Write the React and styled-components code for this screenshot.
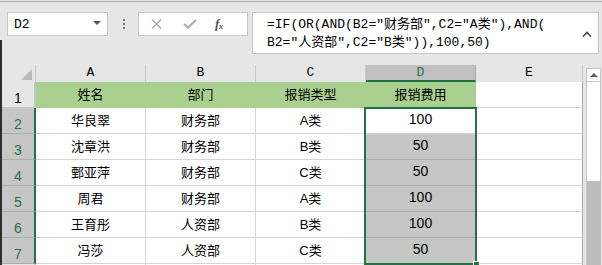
import React from 'react';
import styled, { createGlobalStyle } from 'styled-components';

const GlobalStyle = createGlobalStyle`
  html, body {
    margin: 0;
    padding: 0;
    background: #e6e6e6;
  }
  body {
    font-family: "Liberation Sans", "Noto Sans CJK SC", sans-serif;
  }
`

const Window = styled.div`
  width: 602px;
  height: 265px;
  overflow: hidden;
  background-color: #e6e6e6;
  background-image: linear-gradient(#2e2e2e, #2e2e2e);
  background-size: 2px 225px;
  background-position: 0 40px;
  background-repeat: no-repeat;
`

const TopLine = styled.div`
  height: 1px;
  margin-top: 1px;
  background: #ababab;
`

const FormulaBar = styled.div`
  display: flex;
  align-items: flex-start;
  padding: 10px 0 0 7px;
  height: 51px;
  box-sizing: border-box;
`

const NameBox = styled.div`
  width: 101px;
  height: 24px;
  box-sizing: border-box;
  border: 1px solid #c6c6c6;
  background: #fff;
  display: flex;
  align-items: center;
  justify-content: space-between;
  padding: 0 6px 0 6px;
  font-family: "Liberation Mono", "Noto Sans CJK SC", monospace;
  font-size: 13px;
  color: #000;
`

const DropArrow = styled.span`
  width: 0;
  height: 0;
  border-left: 4px solid transparent;
  border-right: 4px solid transparent;
  border-top: 4px solid #555;
  margin-top: -2px;
`

const Dots = styled.div`
  display: flex;
  flex-direction: column;
  gap: 2px;
  margin: 7px 13px 0 15px;
`

const Dot = styled.span`
  width: 2px;
  height: 2px;
  background: #707070;
`

const ButtonsBox = styled.div`
  width: 110px;
  height: 24px;
  box-sizing: border-box;
  border: 1px solid #c6c6c6;
  background: #fff;
  display: flex;
  align-items: center;
  padding-left: 12px;
`

const BarButton = styled.span`
  width: 36px;
  display: flex;
  align-items: center;
  justify-content: flex-start;
`

const Fx = styled.span`
  font-family: "Liberation Serif", serif;
  font-style: italic;
  font-weight: bold;
  font-size: 13px;
  color: #555;
  letter-spacing: -0.5px;
  sub {
    font-size: 9px;
    vertical-align: -1px;
  }
`

const FormulaBox = styled.div`
  margin-left: 4px;
  width: 347px;
  height: 42px;
  box-sizing: border-box;
  border: 1px solid #c6c6c6;
  background: #fff;
  display: flex;
  justify-content: space-between;
  padding: 3px 6px 0 14px;
`

const FormulaText = styled.div`
  font-family: "Liberation Mono", "Noto Sans CJK SC", monospace;
  font-size: 13px;
  line-height: 18px;
  color: #000;
  white-space: pre;
`

const Caret = styled.span`
  margin-top: 7px;
`

const Sheet = styled.div`
  display: flex;
  align-items: flex-start;
  margin-top: 12px;
  padding-left: 2px;
`

const Grid = styled.div`
  position: relative;
  display: grid;
  grid-template-columns: 34px 110px 110px 110px 110px 107px;
  grid-template-rows: 17px repeat(8, 26px);
`

const Corner = styled.div`
  border-right: 1px solid #c6c6c6;
  display: flex;
  align-items: flex-end;
  justify-content: flex-end;
  padding: 0 3px 2px 0;
`

const CornerTriangle = styled.span`
  width: 0;
  height: 0;
  border-left: 11px solid transparent;
  border-bottom: 11px solid #b9b9b9;
`

const ColHead = styled.div`
  box-sizing: border-box;
  background: ${p => (p.$selected ? '#c0c0c0' : '#e6e6e6')};
  border-right: 1px solid ${p => (p.$selected ? '#a8a8a8' : '#c9c9c9')};
  border-bottom: ${p => (p.$selected ? '2px solid #217346' : 'none')};
  color: ${p => (p.$selected ? '#217346' : '#000')};
  font-family: "Liberation Mono", monospace;
  font-size: 13px;
  display: flex;
  align-items: flex-end;
  justify-content: center;
  padding-bottom: ${p => (p.$selected ? '0' : '2px')};
  line-height: 14px;
`

const RowHead = styled.div`
  box-sizing: border-box;
  background: ${p => (p.$selected ? '#c6c6c6' : '#e6e6e6')};
  border-right: 2px solid ${p => (p.$selected ? '#217346' : '#c6c6c6')};
  border-bottom: 1px solid ${p => (p.$selected ? '#ababab' : '#c6c6c6')};
  color: ${p => (p.$selected ? '#217346' : '#000')};
  font-size: 14px;
  display: flex;
  align-items: flex-end;
  justify-content: center;
  padding-bottom: 1px;
  line-height: 16px;
`

const Cell = styled.div`
  box-sizing: border-box;
  background: ${p => p.$bg || '#fff'};
  border-right: 1px solid ${p => p.$edge || p.$line || '#d4d4d4'};
  border-bottom: 1px solid ${p => p.$line || '#d4d4d4'};
  display: flex;
  align-items: center;
  justify-content: center;
  padding-bottom: 3px;
  font-family: "Liberation Sans", "Noto Sans CJK SC", sans-serif;
  font-size: ${p => (p.$num ? '14px' : '13px')};
  color: #000;
`

/* absolutely placed grid child: it overlays D2:D7 without taking grid cells */
const Selection = styled.div`
  position: absolute;
  grid-column: 5 / 6;
  grid-row: 3 / 9;
  top: -1px;
  left: -2px;
  right: -1px;
  bottom: -1px;
  border: 2px solid #217346;
  pointer-events: none;
`

const FillHandle = styled.span`
  position: absolute;
  right: -4px;
  bottom: -4px;
  width: 5px;
  height: 5px;
  background: #217346;
  box-shadow: 0 0 0 1px #fff;
`

const Scrollbar = styled.div`
  margin-left: 3px;
  margin-top: 3px;
  width: 15px;
  height: 200px;
  display: flex;
  flex-direction: column;
`

const ScrollUp = styled.div`
  height: 14px;
  box-sizing: border-box;
  border: 1px solid #c4c4c4;
  background: #fff;
  display: flex;
  align-items: center;
  justify-content: center;
  &::after {
    content: '';
    border-left: 4px solid transparent;
    border-right: 4px solid transparent;
    border-bottom: 4px solid #606060;
  }
`

const ScrollTrack = styled.div`
  height: 100px;
  box-sizing: border-box;
  border: 1px solid #c4c4c4;
  border-top: none;
  background: #fff;
`

const ScrollThumb = styled.div`
  flex: 1;
  background: #bcbcbc;
  border-left: 1px solid #c4c4c4;
`

const cols = ['A', 'B', 'C', 'D', 'E'];

const rows = [
  ['华良翠', '财务部', 'A类', 100],
  ['沈章洪', '财务部', 'B类', 50],
  ['鄄亚萍', '财务部', 'C类', 50],
  ['周君', '财务部', 'A类', 100],
  ['王育彤', '人资部', 'B类', 100],
  ['冯莎', '人资部', 'C类', 50],
];

const header = ['姓名', '部门', '报销类型', '报销费用'];

const App = () => (
  <Window>
    <GlobalStyle />
    <TopLine />
    <FormulaBar>
      <NameBox>
        D2
        <DropArrow />
      </NameBox>
      <Dots>
        <Dot /><Dot /><Dot />
      </Dots>
      <ButtonsBox>
        <BarButton>
          <svg width="11" height="10" viewBox="0 0 11 10">
            <path d="M1 0.5 L10 9.5 M10 0.5 L1 9.5" stroke="#a2a2a2" strokeWidth="1.2" fill="none" />
          </svg>
        </BarButton>
        <BarButton>
          <svg width="14" height="10" viewBox="0 0 14 10">
            <path d="M1 5 L5 8.5 L13 1" stroke="#adadad" strokeWidth="2.2" fill="none" />
          </svg>
        </BarButton>
        <BarButton>
          <Fx>f<sub>x</sub></Fx>
        </BarButton>
      </ButtonsBox>
      <FormulaBox>
        <FormulaText>
          {'=IF(OR(AND(B2="财务部",C2="A类"),AND(\nB2="人资部",C2="B类")),100,50)'}
        </FormulaText>
        <Caret>
          <svg width="10" height="6" viewBox="0 0 10 6">
            <path d="M1 5.5 L5 1.5 L9 5.5" stroke="#444" strokeWidth="1.6" fill="none" />
          </svg>
        </Caret>
      </FormulaBox>
    </FormulaBar>
    <Sheet>
      <Grid>
        <Corner><CornerTriangle /></Corner>
        {cols.map(c => (
          <ColHead key={c} $selected={c === 'D'}>{c}</ColHead>
        ))}

        <RowHead>1</RowHead>
        {header.map(h => (
          <Cell key={h} $bg="#a9d08e" $line="#a9d08e">{h}</Cell>
        ))}
        <Cell $edge="#a6a6a6" />

        {rows.map((r, i) => {
          const active = i === 0;
          return (
            <React.Fragment key={i}>
              <RowHead $selected>{i + 2}</RowHead>
              <Cell>{r[0]}</Cell>
              <Cell>{r[1]}</Cell>
              <Cell>{r[2]}</Cell>
              <Cell $num $bg={active ? '#fff' : '#c6c6c6'} $line={active ? '#d4d4d4' : '#ababab'}>
                {r[3]}
              </Cell>
              <Cell $edge="#a6a6a6" />
            </React.Fragment>
          );
        })}

        <RowHead />
        <Cell /><Cell /><Cell /><Cell /><Cell $edge="#a6a6a6" />

        <Selection>
          <FillHandle />
        </Selection>
      </Grid>
      <Scrollbar>
        <ScrollUp />
        <ScrollTrack />
        <ScrollThumb />
      </Scrollbar>
    </Sheet>
  </Window>
);

export default App;
